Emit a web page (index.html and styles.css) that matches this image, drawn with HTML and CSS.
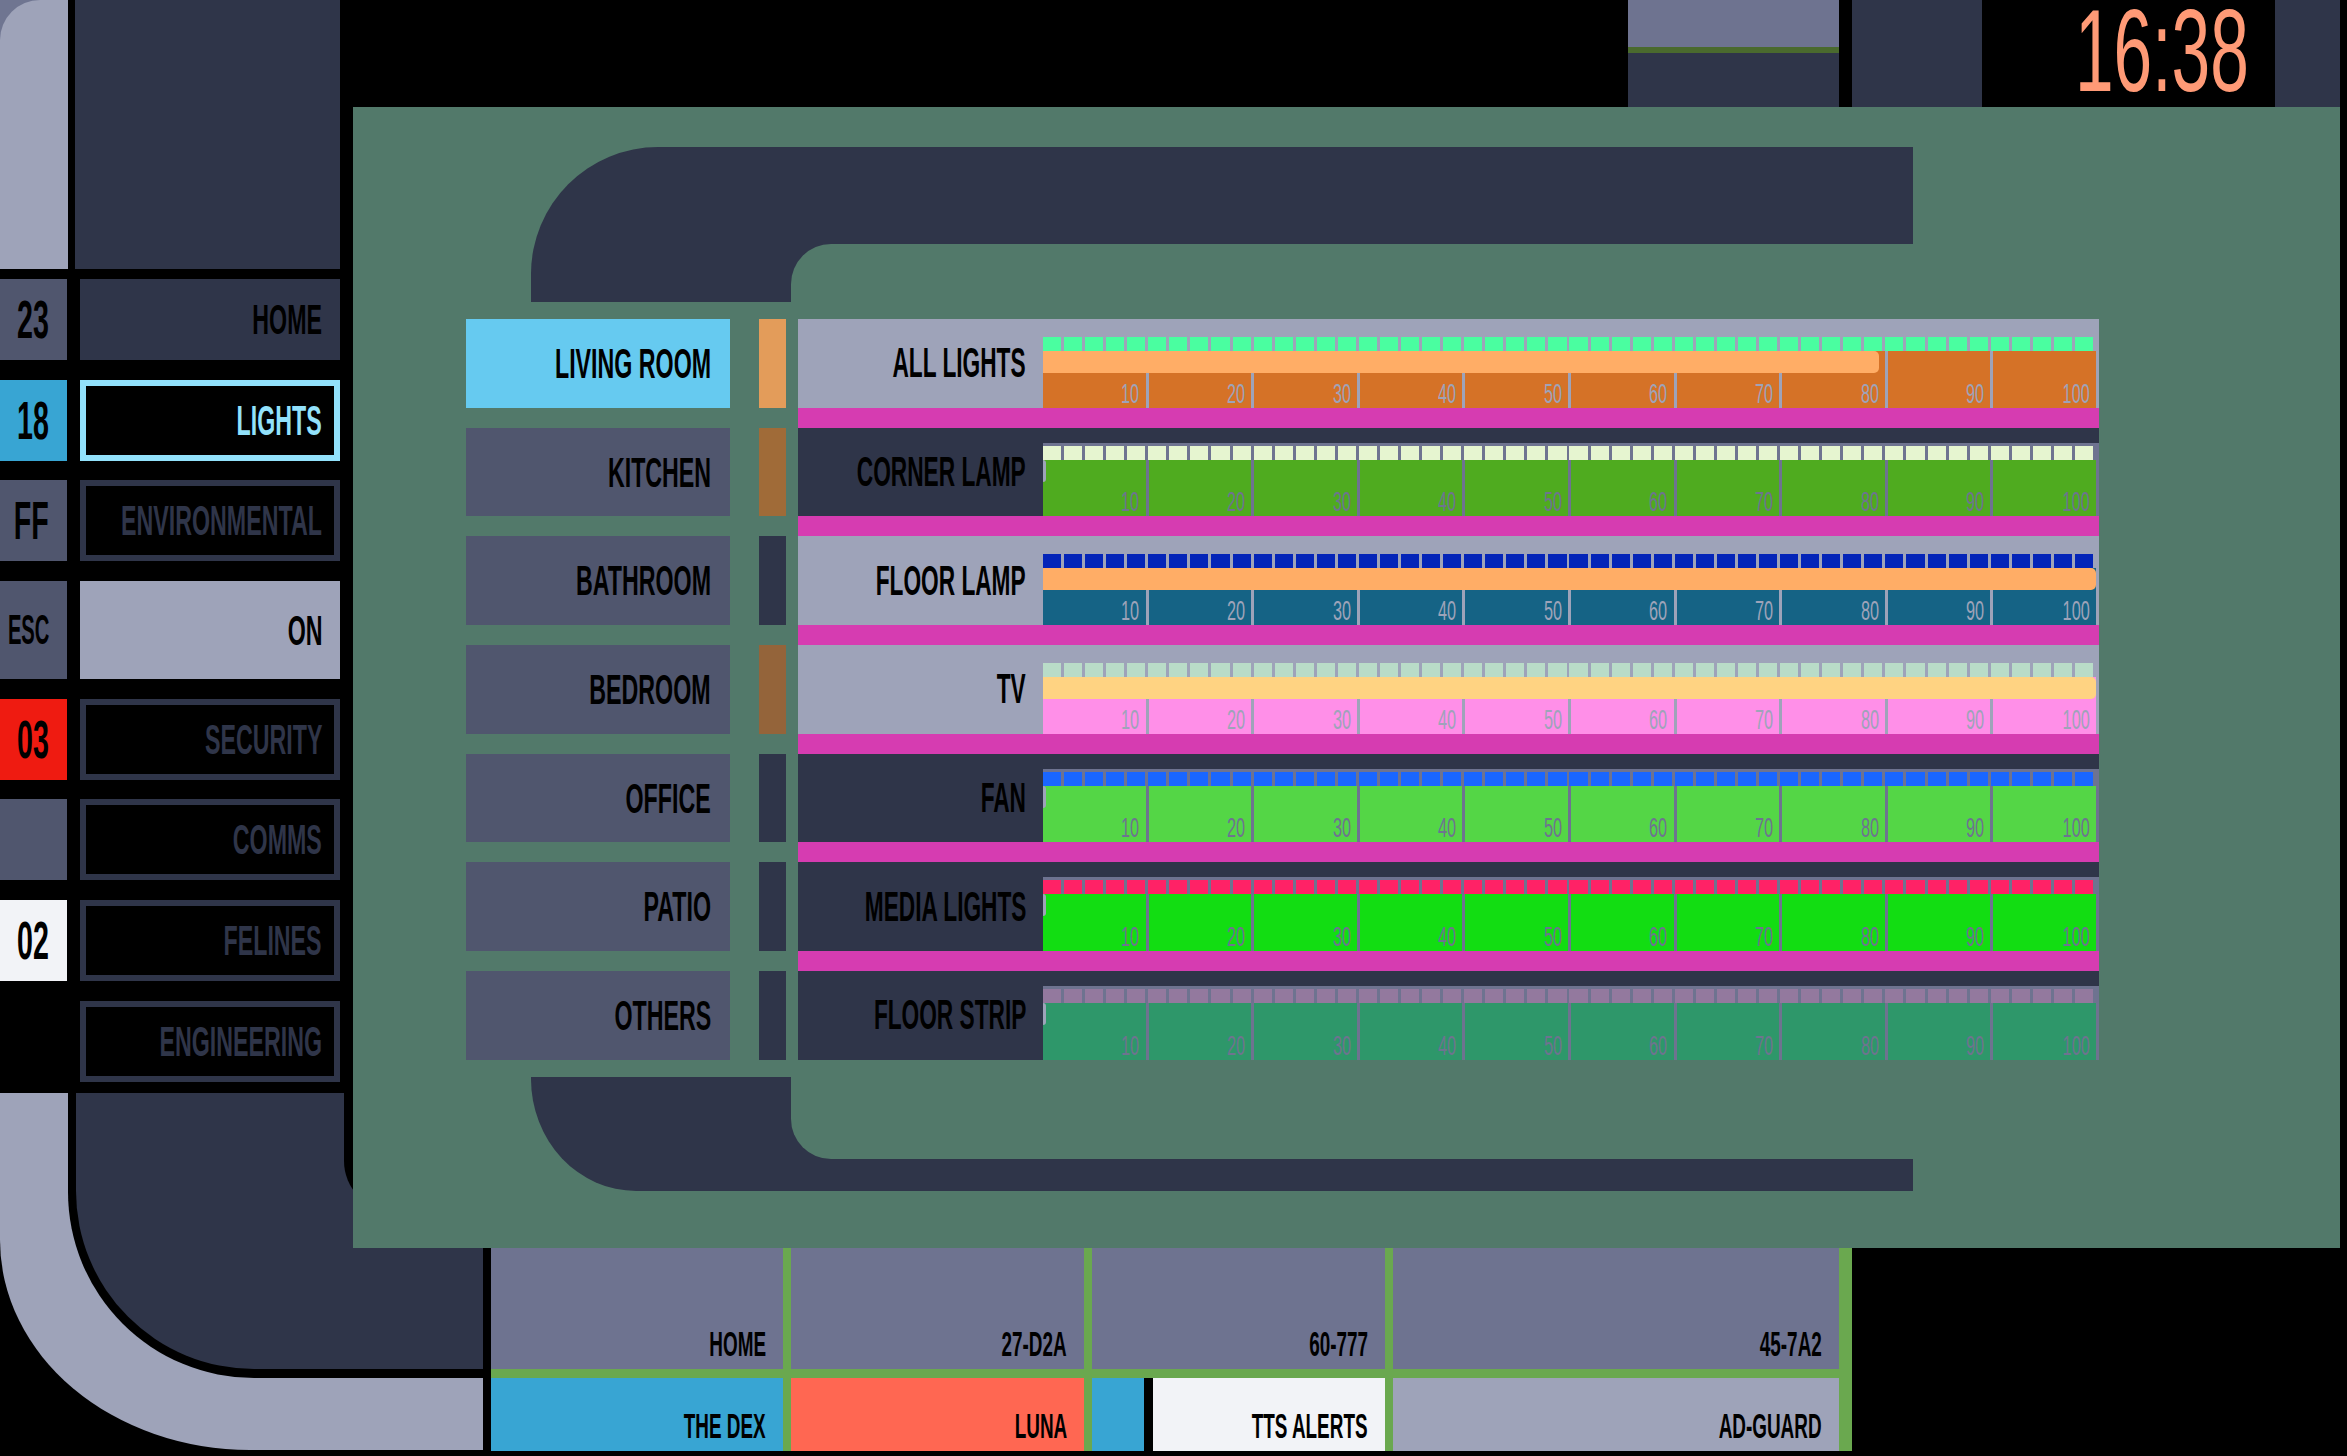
FILE: index.html
```html
<!DOCTYPE html>
<html lang="en">
<head>
<meta charset="utf-8">
<title>LCARS Lights</title>
<link rel="stylesheet" href="styles.css">
</head>
<body>
<div class="screen">
  <aside class="sidebar">
    <div class="cap">
      <div class="cap-light"><div class="cap-light-inner"></div></div>
      <div class="cap-dark"></div>
    </div>
    <nav class="nav">
      <div class="nav-row"><div class="num slate"><span class="t">23</span></div><div class="btn btn-home"><span class="t">HOME</span></div></div>
      <div class="nav-row"><div class="num blue"><span class="t">18</span></div><div class="btn active"><span class="t">LIGHTS</span></div></div>
      <div class="nav-row"><div class="num slate"><span class="t">FF</span></div><div class="btn outline"><span class="t">ENVIRONMENTAL</span></div></div>
      <div class="nav-row tall"><div class="num slate small"><span class="t">ESC</span></div><div class="btn btn-on"><span class="t">ON</span></div></div>
      <div class="nav-row"><div class="num red"><span class="t">03</span></div><div class="btn outline"><span class="t">SECURITY</span></div></div>
      <div class="nav-row"><div class="num slate"></div><div class="btn outline"><span class="t">COMMS</span></div></div>
      <div class="nav-row"><div class="num white"><span class="t">02</span></div><div class="btn outline"><span class="t">FELINES</span></div></div>
      <div class="nav-row"><div class="num none"></div><div class="btn outline"><span class="t">ENGINEERING</span></div></div>
    </nav>
  </aside>

  <header class="topbar">
    <div class="tb1"><div class="tb1-a"></div><div class="tb1-b"></div><div class="tb1-c"></div></div>
    <div class="tb2"></div>
    <div class="clock"><span class="t">16:38</span></div>
    <div class="tb3"></div>
  </header>

  <div class="elbow-bl"><div class="elbow-gap"><div class="elbow-dark"></div></div></div>

  <main class="panel">
    <div class="elbow-top"></div>
    <div class="content">
      <div class="rooms">
        <div class="room active"><span class="t">LIVING ROOM</span></div>
        <div class="room"><span class="t">KITCHEN</span></div>
        <div class="room"><span class="t">BATHROOM</span></div>
        <div class="room"><span class="t">BEDROOM</span></div>
        <div class="room"><span class="t">OFFICE</span></div>
        <div class="room"><span class="t">PATIO</span></div>
        <div class="room"><span class="t">OTHERS</span></div>
      </div>
      <div class="inds">
        <div class="ind ind-orange"></div>
        <div class="ind ind-brown"></div>
        <div class="ind"></div>
        <div class="ind ind-brown2"></div>
        <div class="ind"></div>
        <div class="ind"></div>
        <div class="ind"></div>
      </div>
      <div class="devices">
        <div class="dev light c-all">
          <div class="label"><span class="t">ALL LIGHTS</span></div>
          <div class="slider"><div class="teeth"></div>
            <div class="track"><div class="fill" style="width:79.4%"></div>
              <div class="seg"><span class="t">10</span></div><div class="seg"><span class="t">20</span></div><div class="seg"><span class="t">30</span></div><div class="seg"><span class="t">40</span></div><div class="seg"><span class="t">50</span></div><div class="seg"><span class="t">60</span></div><div class="seg"><span class="t">70</span></div><div class="seg"><span class="t">80</span></div><div class="seg"><span class="t">90</span></div><div class="seg"><span class="t">100</span></div>
            </div>
          </div>
        </div>
        <div class="sep"></div>
        <div class="dev dark c-corner">
          <div class="label"><span class="t">CORNER LAMP</span></div>
          <div class="slider"><div class="teeth"></div>
            <div class="track"><div class="fill" style="width:0.3%"></div>
              <div class="seg"><span class="t">10</span></div><div class="seg"><span class="t">20</span></div><div class="seg"><span class="t">30</span></div><div class="seg"><span class="t">40</span></div><div class="seg"><span class="t">50</span></div><div class="seg"><span class="t">60</span></div><div class="seg"><span class="t">70</span></div><div class="seg"><span class="t">80</span></div><div class="seg"><span class="t">90</span></div><div class="seg"><span class="t">100</span></div>
            </div>
          </div>
        </div>
        <div class="sep"></div>
        <div class="dev light c-floor">
          <div class="label"><span class="t">FLOOR LAMP</span></div>
          <div class="slider"><div class="teeth"></div>
            <div class="track"><div class="fill" style="width:100%"></div>
              <div class="seg"><span class="t">10</span></div><div class="seg"><span class="t">20</span></div><div class="seg"><span class="t">30</span></div><div class="seg"><span class="t">40</span></div><div class="seg"><span class="t">50</span></div><div class="seg"><span class="t">60</span></div><div class="seg"><span class="t">70</span></div><div class="seg"><span class="t">80</span></div><div class="seg"><span class="t">90</span></div><div class="seg"><span class="t">100</span></div>
            </div>
          </div>
        </div>
        <div class="sep"></div>
        <div class="dev light c-tv">
          <div class="label"><span class="t">TV</span></div>
          <div class="slider"><div class="teeth"></div>
            <div class="track"><div class="fill" style="width:100%"></div>
              <div class="seg"><span class="t">10</span></div><div class="seg"><span class="t">20</span></div><div class="seg"><span class="t">30</span></div><div class="seg"><span class="t">40</span></div><div class="seg"><span class="t">50</span></div><div class="seg"><span class="t">60</span></div><div class="seg"><span class="t">70</span></div><div class="seg"><span class="t">80</span></div><div class="seg"><span class="t">90</span></div><div class="seg"><span class="t">100</span></div>
            </div>
          </div>
        </div>
        <div class="sep"></div>
        <div class="dev dark c-fan">
          <div class="label"><span class="t">FAN</span></div>
          <div class="slider"><div class="teeth"></div>
            <div class="track"><div class="fill" style="width:0.3%"></div>
              <div class="seg"><span class="t">10</span></div><div class="seg"><span class="t">20</span></div><div class="seg"><span class="t">30</span></div><div class="seg"><span class="t">40</span></div><div class="seg"><span class="t">50</span></div><div class="seg"><span class="t">60</span></div><div class="seg"><span class="t">70</span></div><div class="seg"><span class="t">80</span></div><div class="seg"><span class="t">90</span></div><div class="seg"><span class="t">100</span></div>
            </div>
          </div>
        </div>
        <div class="sep"></div>
        <div class="dev dark c-media">
          <div class="label"><span class="t">MEDIA LIGHTS</span></div>
          <div class="slider"><div class="teeth"></div>
            <div class="track"><div class="fill" style="width:0.3%"></div>
              <div class="seg"><span class="t">10</span></div><div class="seg"><span class="t">20</span></div><div class="seg"><span class="t">30</span></div><div class="seg"><span class="t">40</span></div><div class="seg"><span class="t">50</span></div><div class="seg"><span class="t">60</span></div><div class="seg"><span class="t">70</span></div><div class="seg"><span class="t">80</span></div><div class="seg"><span class="t">90</span></div><div class="seg"><span class="t">100</span></div>
            </div>
          </div>
        </div>
        <div class="sep"></div>
        <div class="dev dark c-strip">
          <div class="label"><span class="t">FLOOR STRIP</span></div>
          <div class="slider"><div class="teeth"></div>
            <div class="track"><div class="fill" style="width:0.3%"></div>
              <div class="seg"><span class="t">10</span></div><div class="seg"><span class="t">20</span></div><div class="seg"><span class="t">30</span></div><div class="seg"><span class="t">40</span></div><div class="seg"><span class="t">50</span></div><div class="seg"><span class="t">60</span></div><div class="seg"><span class="t">70</span></div><div class="seg"><span class="t">80</span></div><div class="seg"><span class="t">90</span></div><div class="seg"><span class="t">100</span></div>
            </div>
          </div>
        </div>
      </div>
    </div>
    <div class="elbow-bottom"></div>
  </main>

  <footer class="bottombar">
    <div class="cell gray"><span class="t">HOME</span></div>
    <div class="cell gray"><span class="t">27-D2A</span></div>
    <div class="cell gray"><span class="t">60-777</span></div>
    <div class="cell gray"><span class="t">45-7A2</span></div>
    <div class="cell blue"><span class="t">THE DEX</span></div>
    <div class="cell coral"><span class="t">LUNA</span></div>
    <div class="cell split"><div class="mini"></div><div class="tts"><span class="t">TTS ALERTS</span></div></div>
    <div class="cell lilac"><span class="t">AD-GUARD</span></div>
  </footer>
</div>
</body>
</html>
```

FILE: styles.css
```css
* { box-sizing: border-box; }
html, body { margin: 0; padding: 0; background: #000; }
body {
  width: 2347px; height: 1456px; overflow: hidden;
  font-family: "Liberation Sans", Arial, sans-serif;
  font-weight: 700; color: #000;
}
.screen {
  display: grid;
  grid-template-columns: 340px 13px 130px 8px 1137px 224px 488px 7px;
  grid-template-rows: 107px 986px 155px 203px 5px;
  width: 2347px; height: 1456px;
}
.t {
  display: inline-block; white-space: nowrap; line-height: 1; flex-shrink: 0;
  transform: scaleX(.54); transform-origin: 100% 50%;
}

/* sidebar */
.sidebar { grid-column: 1 / 2; grid-row: 1 / 3; display: flex; flex-direction: column; min-width: 0; }
.cap { height: 269px; display: flex; gap: 7px; margin-bottom: 10px; }
.cap-light { width: 68px; background: #6f7591; }
.cap-light-inner { height: 100%; background: #9ea3b9; border-top-left-radius: 40px; }
.cap-dark { flex: 1; background: #2f3549; }
.nav { display: flex; flex-direction: column; gap: 19.7px; }
.nav-row { display: flex; gap: 13px; height: 81px; }
.nav-row.tall { height: 98px; }
.num {
  width: 67px; flex-shrink: 0; display: flex; align-items: center; justify-content: flex-end;
  padding-right: 18px; font-size: 53px;
}
.num.small { font-size: 42px; }
.num.small .t { transform: scaleX(.48); }
.num.slate { background: #50566e; }
.num.blue { background: #38a5d3; }
.num.red { background: #ef1b11; }
.num.white { background: #f2f3f7; }
.btn {
  flex: 1 1 0; min-width: 0; display: flex; align-items: center; justify-content: flex-end;
  padding-right: 18px; font-size: 43px;
}
.btn-home { background: #2f3549; }
.btn-on { background: #9ea3b9; }
.btn.outline { border: 6px solid #2f3549; color: #2f3549; padding-right: 12px; }
.btn.active { border: 6px solid #92e1fb; color: #92e1fb; padding-right: 12px; }

/* top bar */
.topbar { grid-column: 6 / 8; grid-row: 1 / 2; display: flex; }
.tb1 { width: 211px; display: flex; flex-direction: column; }
.tb1-a { height: 47px; background: #6e7390; }
.tb1-b { height: 6px; background: #4a6a2e; }
.tb1-c { flex: 1; background: #2f3549; }
.tb2 { width: 130px; margin-left: 13px; background: #2f3549; }
.clock {
  width: 293px; display: flex; justify-content: flex-end; align-items: flex-start;
  padding-right: 26px; color: #ff9a76; font-size: 117px; font-weight: 400;
}
.clock .t { transform: scaleX(.594); line-height: .75; margin-top: 7px; }
.tb3 { flex: 1; background: #2f3549; }

/* bottom-left elbow */
.elbow-bl {
  grid-column: 1 / 4; grid-row: 3 / 5; height: 357px;
  background: #9ea3b9; border-bottom-left-radius: 250px 210px;
}
.elbow-gap { margin-left: 68px; height: 285px; background: #000; border-bottom-left-radius: 186px; }
.elbow-dark {
  margin-left: 8px; height: 276px; background: #2f3549;
  border-bottom-left-radius: 178px; position: relative;
}
.elbow-dark::after {
  content: ""; position: absolute; top: 0; right: 0; width: 139px; height: 118px;
  background: #000; border-bottom-left-radius: 50px;
}

/* main panel */
.panel {
  grid-column: 3 / 8; grid-row: 2 / 4; background: #52796a;
  padding: 40px 0 0 113px; display: flex; flex-direction: column;
  position: relative; z-index: 2;
}
.elbow-top {
  margin-left: 65px; width: 1382px; height: 155px; background: #2f3549;
  border-top-left-radius: 127px; position: relative;
}
.elbow-top::after {
  content: ""; position: absolute; left: 260px; top: 97px; right: 0; bottom: 0;
  background: #52796a; border-top-left-radius: 40px;
}
.elbow-bottom {
  margin-top: 17px; margin-left: 65px; width: 1382px; height: 114px; background: #2f3549;
  border-bottom-left-radius: 105px 112px; position: relative;
}
.elbow-bottom::after {
  content: ""; position: absolute; left: 260px; top: 0; right: 0; bottom: 32px;
  background: #52796a; border-bottom-left-radius: 40px;
}
.content { margin-top: 17px; height: 741px; display: flex; }
.rooms { width: 264px; display: flex; flex-direction: column; gap: 20px; }
.room {
  height: 88.7px; background: #50566e; display: flex; align-items: center;
  justify-content: flex-end; padding-right: 19px; font-size: 43px; min-width: 0;
}
.room.active { background: #66caf0; }
.inds { width: 27px; margin-left: 29px; display: flex; flex-direction: column; gap: 20px; }
.ind { height: 88.7px; background: #2f3549; }
.ind-orange { background: #e39c5a; }
.ind-brown { background: #a06b38; }
.ind-brown2 { background: #94643a; }

.devices { width: 1301px; margin-left: 12px; display: flex; flex-direction: column; }
.dev { height: 88.7px; display: flex; background: var(--bg); }
.dev.light { --bg: #9ea3b9; --div: #9ea3b9; }
.dev.dark { --bg: #2f3549; --div: #6e7390; --fill: #9ea3b9; }
.c-all { --tooth: #4afea0; --fill: #ffad66; --track: #d57227; }
.c-corner { --tooth: #e6f5d0; --track: #4fab1f; }
.c-floor { --tooth: #0424b8; --fill: #ffad66; --track: #156385; }
.c-tv { --tooth: #b9dcc8; --fill: #ffd382; --track: #ff8fe8; }
.c-fan { --tooth: #1a66ff; --track: #54d646; }
.c-media { --tooth: #ff2266; --track: #12dd12; }
.c-strip { --tooth: #93799e; --track: #2e976a; }
.sep { height: 20px; background: #d63cb1; }
.label {
  width: 245px; flex-shrink: 0; min-width: 0; display: flex; align-items: center; justify-content: flex-end;
  padding-right: 17px; font-size: 42px;
}
.slider {
  width: 1056px; flex-shrink: 0; margin-top: 15px; padding: 3px 3px 0 0; background: var(--div);
  display: flex; flex-direction: column;
}
.teeth {
  height: 14px;
  background: repeating-linear-gradient(to right, var(--tooth) 0 18.06px, transparent 18.06px 21.06px);
}
.track { flex: 1; display: flex; gap: 3px; position: relative; }
.seg {
  flex: 1 1 0; min-width: 0; background: var(--track); display: flex; align-items: flex-end;
  justify-content: flex-end; padding-right: 6px; font-size: 28px; font-weight: 400;
  color: var(--div);
}
.seg .t { transform: scaleX(.58); }
.fill {
  position: absolute; left: 0; top: 0; height: 22px; background: var(--fill);
  border-radius: 0 5px 5px 0; z-index: 1;
}

/* bottom bar */
.bottombar {
  grid-column: 5 / 7; grid-row: 4 / 5; background: #6aa84f;
  display: grid; grid-template-columns: 292px 293px 293px 446px;
  grid-template-rows: 121px 73px; gap: 9px 8px; padding-right: 13px;
}
.cell {
  display: flex; align-items: flex-end; justify-content: flex-end; min-width: 0;
  padding: 0 17px 8px 0; font-size: 35px;
}
.cell.gray { background: #6e7390; }
.cell.blue { background: #38a5d3; }
.cell.coral { background: #ff6752; }
.cell.lilac { background: #9ea3b9; }
.cell.split { padding: 0; align-items: stretch; justify-content: stretch; }
.mini { width: 55px; background: #38a5d3; }
.tts {
  flex: 1; border-left: 9px solid #000; background: #f2f3f7;
  display: flex; align-items: flex-end; justify-content: flex-end; padding: 0 17px 8px 0;
}
```
